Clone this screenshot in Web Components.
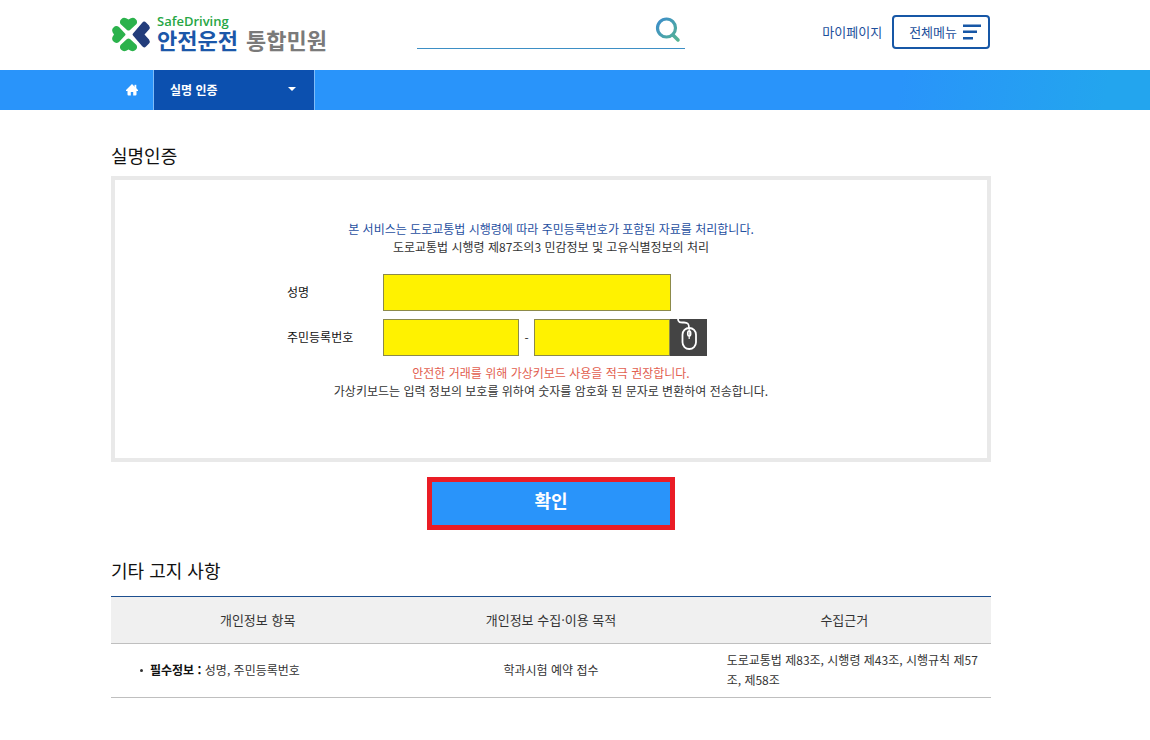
<!DOCTYPE html>
<html lang="ko">
<head>
<meta charset="utf-8">
<meta name="viewport" content="width=device-width, initial-scale=1">
<title>안전운전 통합민원 - 실명인증</title>
<style>
  body {
    margin: 0;
    background: #fff;
    color: #333;
    font: 12px/18px "Noto Sans CJK KR", sans-serif;
    --width: 880px;
    --side: 48px;
    --blue: #2994fa;
    --navy: #0c50af;
  }
  main {
    max-width: var(--width);
    margin: 0 auto;
  }
  .page { padding: 32px var(--side) 40px 0; }
</style>
</head>
<body>
<site-header></site-header>
<site-nav>실명 인증</site-nav>
<div class="page">
  <main>
    <section-title>실명인증</section-title>
    <identity-form>
      <span slot="lead">본 서비스는 도로교통법 시행령에 따라 주민등록번호가 포함된 자료를 처리합니다.</span>
      <span slot="law">도로교통법 시행령 제87조의3 민감정보 및 고유식별정보의 처리</span>
      <span slot="warning">안전한 거래를 위해 가상키보드 사용을 적극 권장합니다.</span>
      <span slot="help">가상키보드는 입력 정보의 보호를 위하여 숫자를 암호화 된 문자로 변환하여 전송합니다.</span>
    </identity-form>
    <confirm-button>확인</confirm-button>
    <section-title>기타 고지 사항</section-title>
    <notice-table></notice-table>
  </main>
</div>

<script>
class SiteLogo extends HTMLElement {
  connectedCallback() {
    const shadow = this.attachShadow({ mode: 'open' });
    shadow.innerHTML = `
      <style>
        :host { display: block; }
        a {
          display: flex;
          align-items: center;
          gap: 6px;
          color: inherit;
          text-decoration: none;
        }
        svg { display: block; flex: none; }
        .names { display: grid; padding-bottom: 4px; }
        .en {
          color: #27a645;
          font-family: "Open Sans", sans-serif;
          font-size: 13px;
          font-weight: 600;
          line-height: 12px;
        }
        .ko {
          display: flex;
          gap: 8px;
          font-size: 22px;
          font-weight: 700;
          line-height: 24px;
          white-space: nowrap;
        }
        .blue { color: #1b57a9; }
        .gray { color: #7a7a7a; }
      </style>
      <a href="#">
        <svg width="40" height="36" viewBox="0 0 40 36" aria-hidden="true">
          <g fill="#2bb24c">
            <path d="M16 13 L9.500 7 Q8 4 10.500 2 Q13 -0.500 17.500 2.500 Q22 -0.500 24.500 2 Q27 4 25.500 7 L19 13 Q17.500 14 16 13Z"/>
            <path d="M14 16.500 L8 10 Q5 8 2.500 10.500 Q-0.500 13 3 17.500 Q-0.500 22 2.500 24.500 Q5 27 8 25 L14 18.500 Q15 17.500 14 16.500Z"/>
            <path d="M16 22 L9.500 28 Q8 31 10.500 33 Q13 35.500 17.500 32.500 Q22 35.500 24.500 33 Q27 31 25.500 28 L19 22 Q17.500 21 16 22Z"/>
          </g>
          <path fill="#233d7b" d="M22 16.500 L31 6 Q33 3.500 35 5.500 L38 8.500 Q39.500 10.500 38 12.500 L33.500 17.500 L38 22.500 Q39.500 24.500 38 26.500 L35 29.500 Q33 31.500 31 29 L22 18.500 Q21 17.500 22 16.500Z"/>
        </svg>
        <span class="names">
          <span class="en">SafeDriving</span>
          <span class="ko"><span class="blue">안전운전</span><span class="gray">통합민원</span></span>
        </span>
      </a>
    `;
  }
}

class SiteHeader extends HTMLElement {
  connectedCallback() {
    const shadow = this.attachShadow({ mode: 'open' });
    shadow.innerHTML = `
      <style>
        :host { display: block; padding-right: var(--side); }
        header {
          display: grid;
          grid-template-columns: 1fr 268px 1fr;
          align-items: center;
          max-width: var(--width);
          min-height: 70px;
          margin: 0 auto;
        }
        form {
          display: flex;
          align-items: center;
          align-self: end;
          margin-bottom: 21px;
          padding: 0 4px 4px 0;
          border-bottom: 1px solid #3d8fc5;
        }
        input {
          flex: 1;
          min-width: 0;
          border: 0;
          background: none;
          font: inherit;
          outline: none;
        }
        button { font: inherit; cursor: pointer; }
        .search { padding: 0; border: 0; background: none; }
        .search svg { display: block; }
        .tools {
          display: flex;
          justify-content: flex-end;
          align-items: center;
          gap: 10px;
          padding: 0 1px 6px 0;
          font-size: 13px;
        }
        a { color: #1c4f9c; text-decoration: none; }
        .menu {
          display: flex;
          align-items: center;
          gap: 6px;
          height: 34px;
          padding: 0 7px 0 15px;
          border: 2px solid #1757a6;
          border-radius: 4px;
          background: #fff;
          color: #1c4f9c;
        }
      </style>
      <header>
        <site-logo></site-logo>
        <form>
          <input type="text" aria-label="검색어">
          <button class="search" type="button" aria-label="검색">
            <svg width="26" height="28" viewBox="0 0 26 28" fill="none">
              <defs>
                <linearGradient id="lens" gradientUnits="userSpaceOnUse" x1="2" y1="6" x2="24" y2="26">
                  <stop offset="0" stop-color="#3d8fc8"/>
                  <stop offset="1" stop-color="#57b68f"/>
                </linearGradient>
              </defs>
              <g stroke="url(#lens)">
                <circle cx="11.500" cy="12" r="9" stroke-width="3.200"/>
                <path d="M18 19 L23 24" stroke-width="3.500" stroke-linecap="round"/>
              </g>
            </svg>
          </button>
        </form>
        <div class="tools">
          <a href="#">마이페이지</a>
          <button class="menu" type="button">전체메뉴
            <svg width="18" height="16" viewBox="0 0 18 16" fill="#1757a6" aria-hidden="true">
              <rect width="18" height="2.500" y="0.500"/>
              <rect width="14" height="2.500" y="6.500"/>
              <rect width="10" height="2.500" y="13"/>
            </svg>
          </button>
        </div>
      </header>
    `;
  }
}

class SiteNav extends HTMLElement {
  connectedCallback() {
    const shadow = this.attachShadow({ mode: 'open' });
    shadow.innerHTML = `
      <style>
        :host {
          display: block;
          padding-right: var(--side);
          background: linear-gradient(100deg, var(--blue) 78%, #23a5ee 96%);
        }
        nav {
          display: flex;
          max-width: var(--width);
          height: 40px;
          margin: 0 auto;
        }
        .home {
          display: grid;
          place-items: center;
          width: 42px;
          border-right: 1px solid #7fbcf8;
        }
        button {
          display: flex;
          justify-content: space-between;
          align-items: center;
          width: 161px;
          padding: 0 18px 0 16px;
          border: 0;
          border-right: 1px solid #7fbcf8;
          background: var(--navy);
          color: #fff;
          font: inherit;
          font-weight: 700;
          cursor: pointer;
        }
      </style>
      <nav>
        <a class="home" href="#" aria-label="홈">
          <svg width="12" height="12" viewBox="0 0 12 12" fill="#fff" aria-hidden="true">
            <path d="M6 0 L12 6 V7 H10.500 V10.500 Q10.500 11.500 9.500 11.500 H7.200 V8 H4.800 V11.500 H2.500 Q1.500 11.500 1.500 10.500 V7 H0 V6Z"/>
            <path d="M8.500 0.800 H10.300 V5 H8.500Z"/>
          </svg>
        </a>
        <button type="button"><slot></slot>
          <svg width="8" height="8" viewBox="0 0 8 8" fill="#fff" aria-hidden="true"><path d="M0 1 H8 L4 5Z"/></svg>
        </button>
      </nav>
    `;
  }
}

class SectionTitle extends HTMLElement {
  connectedCallback() {
    const shadow = this.attachShadow({ mode: 'open' });
    shadow.innerHTML = `
      <style>
        :host { display: block; }
        h2 {
          margin: 0 0 8px;
          color: #111;
          font-size: 18px;
          font-weight: 400;
          line-height: 26px;
        }
      </style>
      <h2><slot></slot></h2>
    `;
  }
}

class IdentityForm extends HTMLElement {
  connectedCallback() {
    const shadow = this.attachShadow({ mode: 'open' });
    shadow.innerHTML = `
      <style>
        :host {
          display: block;
          padding: 40px 20px 58px;
          border: 4px solid #e9e9e9;
        }
        p { margin: 0; text-align: center; }
        .lead { color: #1f4f9f; }
        .warning { color: #e2604f; }
        form {
          display: grid;
          grid-template-columns: 96px 1fr;
          align-items: center;
          row-gap: 8px;
          max-width: 528px;
          margin: 18px auto 8px;
        }
        label { padding-bottom: 2px; color: #111; }
        input {
          display: block;
          box-sizing: border-box;
          width: 136px;
          height: 37px;
          padding: 0 8px;
          border: 1px solid #8c8a4a;
          border-radius: 0;
          background: #fff200;
          font: inherit;
        }
        #name { width: 288px; }
        .number { display: flex; align-items: center; }
        .dash { width: 15px; text-align: center; }
        button {
          width: 37px;
          height: 37px;
          padding: 0;
          border: 0;
          background: #444;
          cursor: pointer;
        }
        svg { display: block; }
      </style>
      <p class="lead"><slot name="lead"></slot></p>
      <p><slot name="law"></slot></p>
      <form>
        <label for="name">성명</label>
        <div><input id="name" type="text"></div>
        <label for="front">주민등록번호</label>
        <div class="number">
          <input id="front" type="text" maxlength="6">
          <span class="dash">-</span>
          <input type="password" maxlength="7" aria-label="주민등록번호 뒷자리">
          <button type="button" aria-label="가상키보드">
            <svg width="37" height="37" viewBox="0 0 37 37" fill="none" stroke="#fff" aria-hidden="true">
              <path stroke-width="1.800" d="M8 0 C8 4 11 3.500 14 3.500 C18 3.500 19 5 19 9"/>
              <rect x="12.500" y="9" width="13.500" height="21" rx="6.700" stroke-width="1.800"/>
              <path stroke-width="1.200" d="M19.200 9 V20"/>
              <rect x="17.700" y="12" width="3" height="5" rx="1.500" stroke-width="1.500"/>
            </svg>
          </button>
        </div>
      </form>
      <p class="warning"><slot name="warning"></slot></p>
      <p><slot name="help"></slot></p>
    `;
  }
}

class ConfirmButton extends HTMLElement {
  connectedCallback() {
    const shadow = this.attachShadow({ mode: 'open' });
    shadow.innerHTML = `
      <style>
        :host {
          display: flex;
          justify-content: center;
          margin: 15px 0 27px;
        }
        button {
          width: 248px;
          height: 53px;
          padding: 0 0 8px;
          border: 5px solid #ea1c25;
          background: var(--blue);
          color: #fff;
          font: inherit;
          font-size: 18px;
          font-weight: 700;
          cursor: pointer;
        }
      </style>
      <button type="button"><slot></slot></button>
    `;
  }
}

class NoticeTable extends HTMLElement {
  connectedCallback() {
    const shadow = this.attachShadow({ mode: 'open' });
    shadow.innerHTML = `
      <style>
        :host { display: block; padding-top: 5px; }
        table {
          width: 100%;
          border-collapse: collapse;
          table-layout: fixed;
          border-top: 1px solid #1d4f8f;
          line-height: 20px;
        }
        th, td { border-bottom: 1px solid #bfbfbf; }
        th {
          padding: 13px 8px;
          background: #f0f0f0;
          font-size: 13px;
          font-weight: 400;
        }
        td {
          padding: 6px 8px 7px 29px;
          word-break: break-all;
        }
        .center { padding: 6px 8px 7px; text-align: center; }
        ul {
          display: grid;
          margin: 0;
          padding: 0;
          list-style: none;
        }
        li { display: flex; align-items: center; gap: 7px; }
        li::before {
          content: "";
          width: 3px;
          height: 3px;
          border-radius: 50%;
          background: #333;
        }
        b { color: #111; }
      </style>
      <table>
        <thead>
          <tr>
            <th scope="col">개인정보 항목</th>
            <th scope="col">개인정보 수집·이용 목적</th>
            <th scope="col">수집근거</th>
          </tr>
        </thead>
        <tbody>
          <tr>
            <td><ul><li><span><b>필수정보 :</b> 성명, 주민등록번호</span></li></ul></td>
            <td class="center">학과시험 예약 접수</td>
            <td>도로교통법 제83조, 시행령 제43조, 시행규칙 제57조, 제58조</td>
          </tr>
        </tbody>
      </table>
    `;
  }
}

customElements.define('site-logo', SiteLogo);
customElements.define('site-header', SiteHeader);
customElements.define('site-nav', SiteNav);
customElements.define('section-title', SectionTitle);
customElements.define('identity-form', IdentityForm);
customElements.define('confirm-button', ConfirmButton);
customElements.define('notice-table', NoticeTable);
</script>
</body>
</html>
